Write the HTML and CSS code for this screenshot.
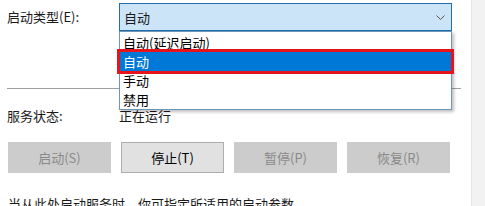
FILE: index.html
```html
<!DOCTYPE html>
<html lang="zh">
<head>
    <meta charset="UTF-8">
    <title>服务属性</title>
    <link rel="stylesheet" href="styles.css">
</head>
<body>
    <div class="dialog">
        <div class="content">
            <div class="type-row">
                <div class="label">启动类型(E):</div>
                <div class="combo">
                    <span class="combo-value">自动</span>
                    <svg class="chevron" width="9" height="5" viewBox="0 0 9 5">
                        <path d="M0.5 0.5 L4.5 4.5 L8.5 0.5" fill="none" stroke="#555" stroke-width="1"/>
                    </svg>
                    <div class="dropdown">
                        <div class="option">自动(延迟启动)</div>
                        <div class="option selected">自动</div>
                        <div class="option">手动</div>
                        <div class="option">禁用</div>
                    </div>
                </div>
            </div>

            <div class="separator"></div>

            <div class="status-row">
                <div class="label">服务状态:</div>
                <div class="status-value">正在运行</div>
            </div>

            <div class="buttons">
                <div class="btn disabled">启动(S)</div>
                <div class="btn">停止(T)</div>
                <div class="btn disabled">暂停(P)</div>
                <div class="btn disabled">恢复(R)</div>
            </div>

            <div class="hint">当从此处启动服务时，你可指定所适用的启动参数。</div>
        </div>
        <div class="side"></div>
    </div>
</body>
</html>
```

FILE: styles.css
```css
body {
    margin: 0;
    font-family: "Noto Sans CJK SC", "Noto Sans", sans-serif;
    font-size: 13px;
    color: #1a1a1a;
    background: #fff;
    overflow: hidden;
}

.dialog {
    display: flex;
    height: 206px;
}

.content {
    flex: 1;
    padding-left: 7px;
}

.side {
    width: 13px;
    background: #f2f2f2;
    border-left: 1px solid #e6e6e6;
}

.type-row {
    display: flex;
    align-items: center;
    margin-top: 3px;
    height: 28px;
}

.label {
    width: 112px;
    line-height: 16px;
}

.combo {
    position: relative;
    box-sizing: border-box;
    width: 333px;
    height: 28px;
    background: #cce4f7;
    border: 1px solid #1f6fae;
    display: flex;
    align-items: center;
    padding-left: 4px;
}

.combo-value {
    flex: 1;
}

.chevron {
    margin-right: 6px;
}

.dropdown {
    position: absolute;
    top: 27px;
    left: -1px;
    right: -1px;
    background: #fff;
    border: 1px solid #6f96b8;
    padding-top: 1px;
    box-shadow: 2px 2px 3px rgba(0,0,0,0.25);
    z-index: 2;
}

.option {
    height: 19px;
    line-height: 19px;
    padding-left: 3px;
    color: #000;
}

.option.selected {
    background: #0078d7;
    color: #fff;
    outline: 3px solid #e8141b;
}

.separator {
    margin-top: 57px;
    margin-right: 10px;
    border-top: 1px solid #a0a0a0;
}

.status-row {
    display: flex;
    margin-top: 19px;
    line-height: 16px;
}

.buttons {
    display: flex;
    gap: 10px;
    margin-top: 18px;
    padding-left: 1px;
}

.btn {
    box-sizing: border-box;
    width: 103px;
    height: 31px;
    line-height: 29px;
    text-align: center;
    background: #e1e1e1;
    border: 1px solid #adadad;
    color: #000;
}

.btn.disabled {
    background: #cccccc;
    border-color: #cccccc;
    color: #8a8a8a;
}

.hint {
    margin-top: 23px;
    line-height: 16px;
    padding-left: 1px;
}
```
